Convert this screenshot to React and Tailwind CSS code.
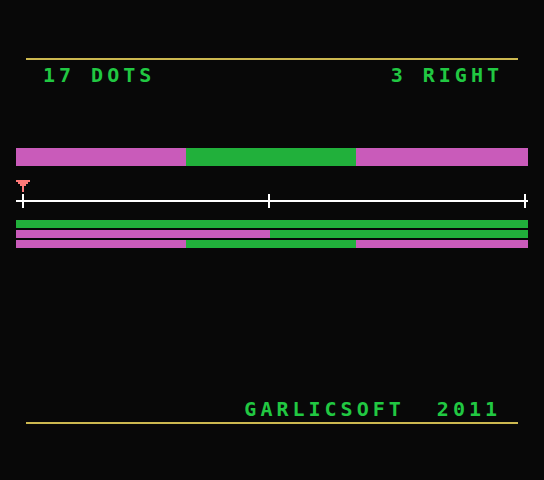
const font = { fontFamily: '"DejaVu Sans Mono", "Liberation Mono", monospace' };

function Bar({ segments, height }) {
  return (
    <div className={`flex w-[512px] ${height}`}>
      {segments.map((s, i) => (
        <div key={i} className={s.cls} />
      ))}
    </div>
  );
}

function Pointer() {
  return (
    <svg width="14" height="12" viewBox="0 0 14 12" className="block">
      <rect x="0" y="0" width="14" height="2" fill="#ff7978" />
      <rect x="2" y="2" width="10" height="2" fill="#ff7978" />
      <rect x="4" y="4" width="6" height="2" fill="#ff7978" />
      <rect x="6" y="6" width="2" height="6" fill="#ff7978" />
    </svg>
  );
}

export default function App() {
  const mag = "bg-[#c95bba]";
  const grn = "bg-[#21b03b]";

  return (
    <div className="w-[544px] h-[480px] bg-[#080808] flex flex-col overflow-hidden" style={font}>
      <div className="mt-[58px] ml-[26px] w-[492px] h-[2px] bg-[#ccb850]" />

      <div className="mt-[7px] h-[16px] flex justify-between pl-[43px] pr-[41px] text-[20px] leading-[16px] tracking-[4px] font-bold text-[#21c842] whitespace-pre">
        <span>17 DOTS</span>
        <span>3 RIGHT</span>
      </div>

      <div className="mt-[65px] ml-[16px]">
        <Bar
          height="h-[18px]"
          segments={[
            { cls: `w-[170px] ${mag}` },
            { cls: `w-[170px] ${grn}` },
            { cls: `flex-1 ${mag}` },
          ]}
        />
      </div>

      <div className="mt-[14px] ml-[16px]">
        <Pointer />
      </div>

      <div className="mt-[2px] ml-[16px] w-[512px] h-[14px] relative">
        <div className="mt-[6px] h-[2px] bg-white" />
        <div className="absolute top-0 left-[6px] w-[2px] h-[14px] bg-white" />
        <div className="absolute top-0 left-[252px] w-[2px] h-[14px] bg-white" />
        <div className="absolute top-0 left-[508px] w-[2px] h-[14px] bg-white" />
      </div>

      <div className="mt-[12px] ml-[16px] flex flex-col gap-[2px]">
        <Bar height="h-[8px]" segments={[{ cls: `flex-1 ${grn}` }]} />
        <Bar
          height="h-[8px]"
          segments={[
            { cls: `w-[254px] ${mag}` },
            { cls: `flex-1 ${grn}` },
          ]}
        />
        <Bar
          height="h-[8px]"
          segments={[
            { cls: `w-[170px] ${mag}` },
            { cls: `w-[170px] ${grn}` },
            { cls: `flex-1 ${mag}` },
          ]}
        />
      </div>

      <div className="mt-auto pb-[56px]">
        <div className="h-[16px] flex justify-end pr-[43px] text-[20px] leading-[16px] tracking-[4px] font-bold text-[#21c842] whitespace-pre">
          <span>GARLICSOFT  2011</span>
        </div>
        <div className="mt-[5px] ml-[26px] w-[492px] h-[2px] bg-[#ccb850]" />
      </div>
    </div>
  );
}
